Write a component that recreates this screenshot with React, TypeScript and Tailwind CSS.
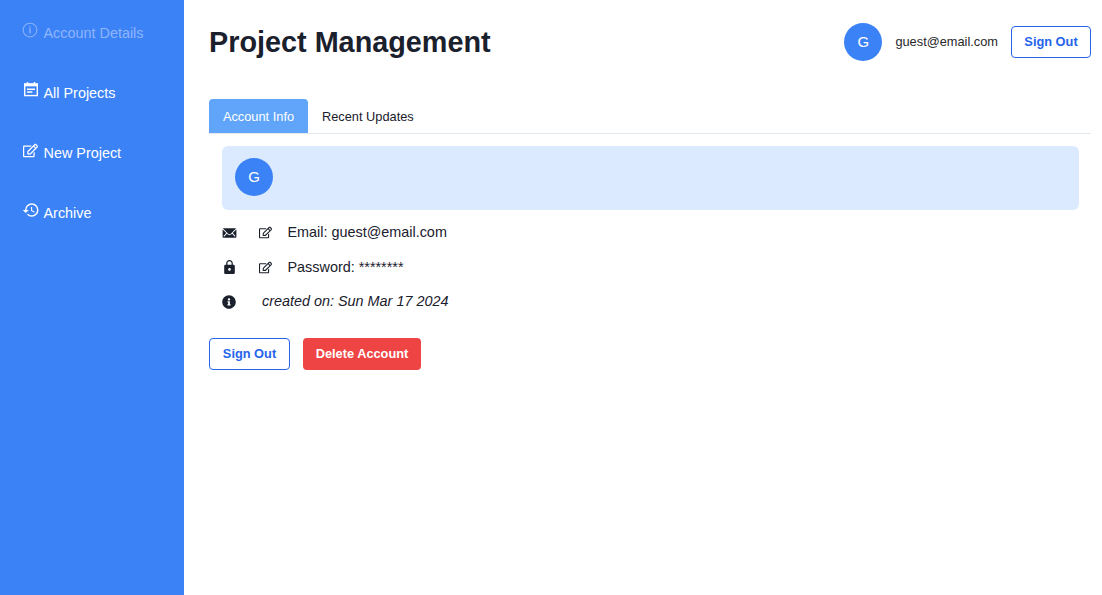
import { FaInfoCircle, FaRegEdit } from 'react-icons/fa'
import { IoIosInformationCircleOutline, IoIosMail, IoMdLock } from 'react-icons/io'
import { MdHistory } from 'react-icons/md'
import type { ReactNode } from 'react'

function CalendarIcon() {
  return (
    <svg width="14" height="15" viewBox="0 0 15 16" className="mt-[2px] shrink-0" fill="none">
      <path d="M3 0h1.6v2H3zM10.4 0H12v2h-1.6z" fill="currentColor" />
      <rect x="0.75" y="2" width="13.5" height="12.5" stroke="currentColor" strokeWidth="1.5" />
      <path d="M1 2h13v2.6H1z" fill="currentColor" />
      <path d="M3.2 7h8.6v1.5H3.2zM3.2 10h5.8v1.5H3.2z" fill="currentColor" />
    </svg>
  )
}

function NavItem({ icon, label, dim }: { icon: ReactNode; label: string; dim?: boolean }) {
  return (
    <div className={`flex h-[60px] items-start pl-[23px] ${dim ? 'text-[#8fb5fb]' : 'text-white'}`}>
      <div className="flex h-[20px] w-[15px] items-start justify-center">{icon}</div>
      <span className="ml-[5.5px] mt-[3px] text-[14.4px] leading-[20px]">{label}</span>
    </div>
  )
}

function Avatar() {
  return (
    <div className="flex h-[38px] w-[38px] items-center justify-center rounded-full bg-[#3b82f6] text-[15px] text-white">
      G
    </div>
  )
}

function SignOut({ className }: { className: string }) {
  return (
    <button className={`h-[32px] rounded border border-[#2563eb] bg-white text-[12.8px] font-bold text-[#2563eb] ${className}`}>
      Sign Out
    </button>
  )
}

export default function App() {
  return (
    <div className="flex h-[595px] w-[1102px] overflow-hidden bg-white font-['Liberation_Sans',sans-serif] text-[#1a202c]">
      {/* Sidebar */}
      <aside className="w-[184px] shrink-0 bg-[#3b82f6] pt-[20px]">
        <NavItem dim label="Account Details" icon={<IoIosInformationCircleOutline size={18} className="-ml-[1px] mr-[1px] mt-[1px] shrink-0" />} />
        <NavItem label="All Projects" icon={<CalendarIcon />} />
        <NavItem label="New Project" icon={<FaRegEdit size={15} className="mt-[3px] shrink-0" />} />
        <NavItem label="Archive" icon={<MdHistory size={18} className="mt-[1px] shrink-0" />} />
      </aside>

      <main className="flex-1 pl-[25px] pr-[11px]">
        {/* Header */}
        <header className="flex h-[84px] items-start justify-between pt-[23px]">
          <h1 className="text-[28.8px] font-bold leading-[38px]">Project Management</h1>
          <div className="flex items-center">
            <Avatar />
            <span className="ml-[13px] mr-[13px] text-[12.8px] text-[#27272a]">guest@email.com</span>
            <SignOut className="w-[80px]" />
          </div>
        </header>

        {/* Tabs */}
        <div className="mt-[15px] flex h-[35px] border-b border-[#e2e8f0] text-[12.8px]">
          <div className="flex h-[34px] w-[99px] items-center justify-center rounded-t bg-[#60a5fa] pt-[1px] text-white">
            Account Info
          </div>
          <div className="flex h-[34px] items-center pl-[14px] pt-[1px] text-[#1a202c]">Recent Updates</div>
        </div>

        <div className="pl-[13px] pr-[12px] pt-[12px]">
          <div className="flex h-[64px] items-center rounded-md bg-[#dbeafe] pb-[2px] pl-[13px]">
            <Avatar />
          </div>

          <div className="mt-[12px] flex h-[20px] items-center">
            <IoIosMail size={18} className="-mx-[1px] mt-[1px] w-[17px]" />
            <FaRegEdit size={13} className="ml-[22px]" />
            <span className="ml-[15.5px] pt-[1px] text-[14.4px]">Email: guest@email.com</span>
          </div>
          <div className="mt-[15px] flex h-[20px] items-center">
            <IoMdLock size={18} className="-mx-[1px] w-[17px]" />
            <FaRegEdit size={13} className="ml-[22px]" />
            <span className="ml-[15.5px] pt-[1px] text-[14.4px]">Password: ********</span>
          </div>
          <div className="mt-[14px] flex h-[20px] items-center">
            <FaInfoCircle size={14} className="mt-[1px] w-[15px] pr-[1px]" />
            <span className="ml-[25px] pt-[1px] text-[14.4px] italic">created on: Sun Mar 17 2024</span>
          </div>
        </div>

        {/* Actions */}
        <div className="mt-[27px] flex gap-[13px]">
          <SignOut className="w-[81px]" />
          <button className="h-[32px] w-[118px] rounded bg-[#ef4444] text-[12.8px] font-bold text-white">
            Delete Account
          </button>
        </div>
      </main>
    </div>
  )
}
